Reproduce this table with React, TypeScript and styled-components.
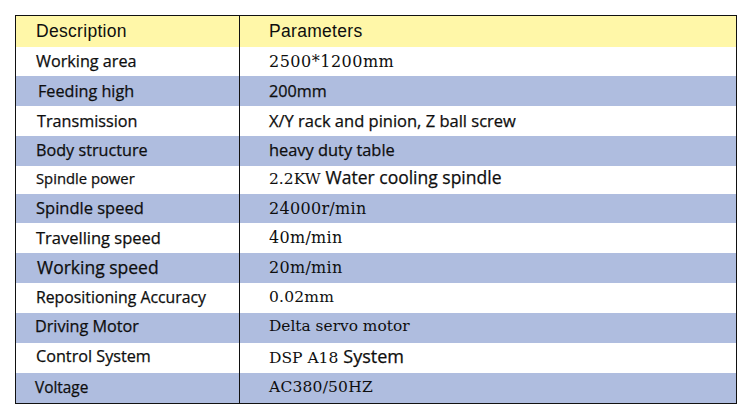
import React from "react";
import styled, { createGlobalStyle } from "styled-components";

const Global = createGlobalStyle`
  html, body { margin: 0; padding: 0; background: #ffffff; }
  body { width: 750px; height: 418px; overflow: hidden; }
`;

type Tone = "head" | "white" | "blue";
type Face = "arial" | "sans" | "serif";

interface Seg { text: string; face: Face; size: number; ls?: number; gap?: number }
interface Row { tone: Tone; h: number; lift?: number; desc: Seg; dx?: number; value: Seg[] }

const SANS = `"Open Sans", "Noto Sans", sans-serif`;
const SERIF = `"DejaVu Serif", "Liberation Serif", serif`;
const ARIAL = `"Liberation Sans", Arial, sans-serif`;

const Page = styled.div`
  padding: 15px 0 0 15px;
`;

const Table = styled.div`
  width: 722px;
  border: 1px solid #111;
  box-sizing: border-box;
  display: flex;
  flex-direction: column;
`;

const RowBox = styled.div<{ $tone: Tone; $h: number }>`
  display: grid;
  grid-template-columns: 224px 1fr;
  height: ${(p) => p.$h}px;
  background: ${(p) =>
    p.$tone === "head" ? "#fff7a8" : p.$tone === "blue" ? "#afbddf" : "#ffffff"};
`;

const DescCell = styled.div<{ $dx: number; $lift: number }>`
  display: flex;
  align-items: center;
  box-sizing: border-box;
  border-right: 1px solid #111;
  padding: 0 0 ${(p) => p.$lift}px ${(p) => p.$dx}px;
  white-space: nowrap;
`;

const ValueCell = styled.div<{ $lift: number }>`
  display: flex;
  align-items: center;
  box-sizing: border-box;
  padding: 0 0 ${(p) => p.$lift}px 29px;
  white-space: nowrap;
`;

const Line = styled.div`
  line-height: 1;
`;

const Text = styled.span<{ $face: Face; $size: number; $ls: number; $gap: number }>`
  font-family: ${(p) => (p.$face === "arial" ? ARIAL : p.$face === "serif" ? SERIF : SANS)};
  font-size: ${(p) => p.$size}px;
  letter-spacing: ${(p) => p.$ls}px;
  margin-right: ${(p) => p.$gap}px;
  color: #0e0e0e;
  line-height: 1;
  -webkit-text-stroke: ${(p) => (p.$face === "sans" ? "0.25px #0e0e0e" : "0")};
`;

const sans = (text: string, size = 16.2, ls = 0): Seg => ({ text, face: "sans", size, ls });
const serif = (text: string, size = 15.5, ls = 0.4, gap = 0): Seg => ({ text, face: "serif", size, ls, gap });
const arial = (text: string, size = 17.5, ls = 0.3): Seg => ({ text, face: "arial", size, ls });

const rows: Row[] = [
  { tone: "head", h: 31, desc: arial("Description"), value: [arial("Parameters")] },
  { tone: "white", h: 29, desc: sans("Working area"), value: [serif("2500*1200mm", 16, 0.5)] },
  { tone: "blue", h: 30, desc: sans("Feeding high"), dx: 22, value: [sans("200mm")] },
  { tone: "white", h: 30, desc: sans("Transmission"), dx: 21, value: [sans("X/Y rack and pinion, Z ball screw", 16.5)] },
  { tone: "blue", h: 30, lift: 1, desc: sans("Body structure"), value: [sans("heavy duty table", 16.4)] },
  {
    tone: "white",
    h: 28,
    lift: 3,
    desc: sans("Spindle power", 14.8),
    value: [serif("2.2KW", 15.5, 0, 5), sans("Water cooling spindle", 17.5)],
  },
  { tone: "blue", h: 29, desc: sans("Spindle speed", 16.5), value: [serif("24000r/min", 16, 0.3)] },
  { tone: "white", h: 30, desc: sans("Travelling speed", 16.5), value: [serif("40m/min", 16, 0.3)] },
  { tone: "blue", h: 30, lift: 1, desc: sans("Working speed", 17.5), dx: 21, value: [serif("20m/min", 16, 0.3)] },
  { tone: "white", h: 30, lift: 1, desc: sans("Repositioning Accuracy", 15.8), value: [serif("0.02mm", 15.5, 0.2)] },
  { tone: "blue", h: 30, lift: 4, desc: sans("Driving Motor", 16.2), dx: 19, value: [serif("Delta servo motor", 15.4, 0)] },
  {
    tone: "white",
    h: 30,
    lift: 3,
    desc: sans("Control System", 16.2),
    value: [serif("DSP A18", 15.5, 0, 5), sans("System", 18)],
  },
  { tone: "blue", h: 30, lift: 1, desc: sans("Voltage", 15.4), dx: 19, value: [serif("AC380/50HZ", 15.5, 0.2)] },
];

const Seg: React.FC<{ s: Seg }> = ({ s }) => (
  <Text $face={s.face} $size={s.size} $ls={s.ls ?? 0} $gap={s.gap ?? 0}>
    {s.text}
  </Text>
);

export default function App() {
  return (
    <Page>
      <Global />
      <Table>
        {rows.map((r, i) => (
          <RowBox key={i} $tone={r.tone} $h={r.h}>
            <DescCell $dx={r.dx ?? 20} $lift={r.lift ?? 0}>
              <Seg s={r.desc} />
            </DescCell>
            <ValueCell $lift={r.lift ?? 0}>
              <Line>
                {r.value.map((s, j) => (
                  <Seg key={j} s={s} />
                ))}
              </Line>
            </ValueCell>
          </RowBox>
        ))}
      </Table>
    </Page>
  );
}
